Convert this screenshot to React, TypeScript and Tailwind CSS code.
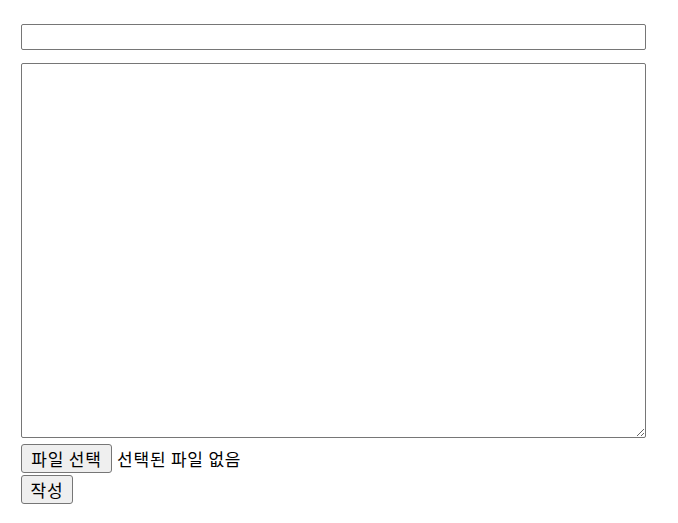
export default function App() {
  return (
    <div className="min-h-[523px] bg-white pl-[21px] pt-[24px] font-['Noto_Sans_CJK_KR','Noto_Sans',sans-serif] text-[17px] tracking-[0.8px] text-black">
      <form className="flex flex-col items-start">
        <input
          type="text"
          className="h-[26px] w-[625px] rounded-[2px] border border-[#767676] bg-white px-[2px] outline-none"
        />
        <textarea className="mt-[13px] h-[375px] w-[625px] rounded-[2px] border border-[#767676] bg-white outline-none" />
        <div className="mt-[6px] flex items-center gap-[5px]">
          <button
            type="button"
            className="flex h-[29px] w-[91px] items-center justify-center rounded-[3px] border border-[#767676] bg-[#efefef] leading-none"
          >
            파일 선택
          </button>
          <span className="leading-none">선택된 파일 없음</span>
        </div>
        <button
          type="submit"
          className="mt-[2px] flex h-[29px] w-[52px] items-center justify-center rounded-[3px] border border-[#767676] bg-[#efefef] leading-none"
        >
          작성
        </button>
      </form>
    </div>
  );
}
